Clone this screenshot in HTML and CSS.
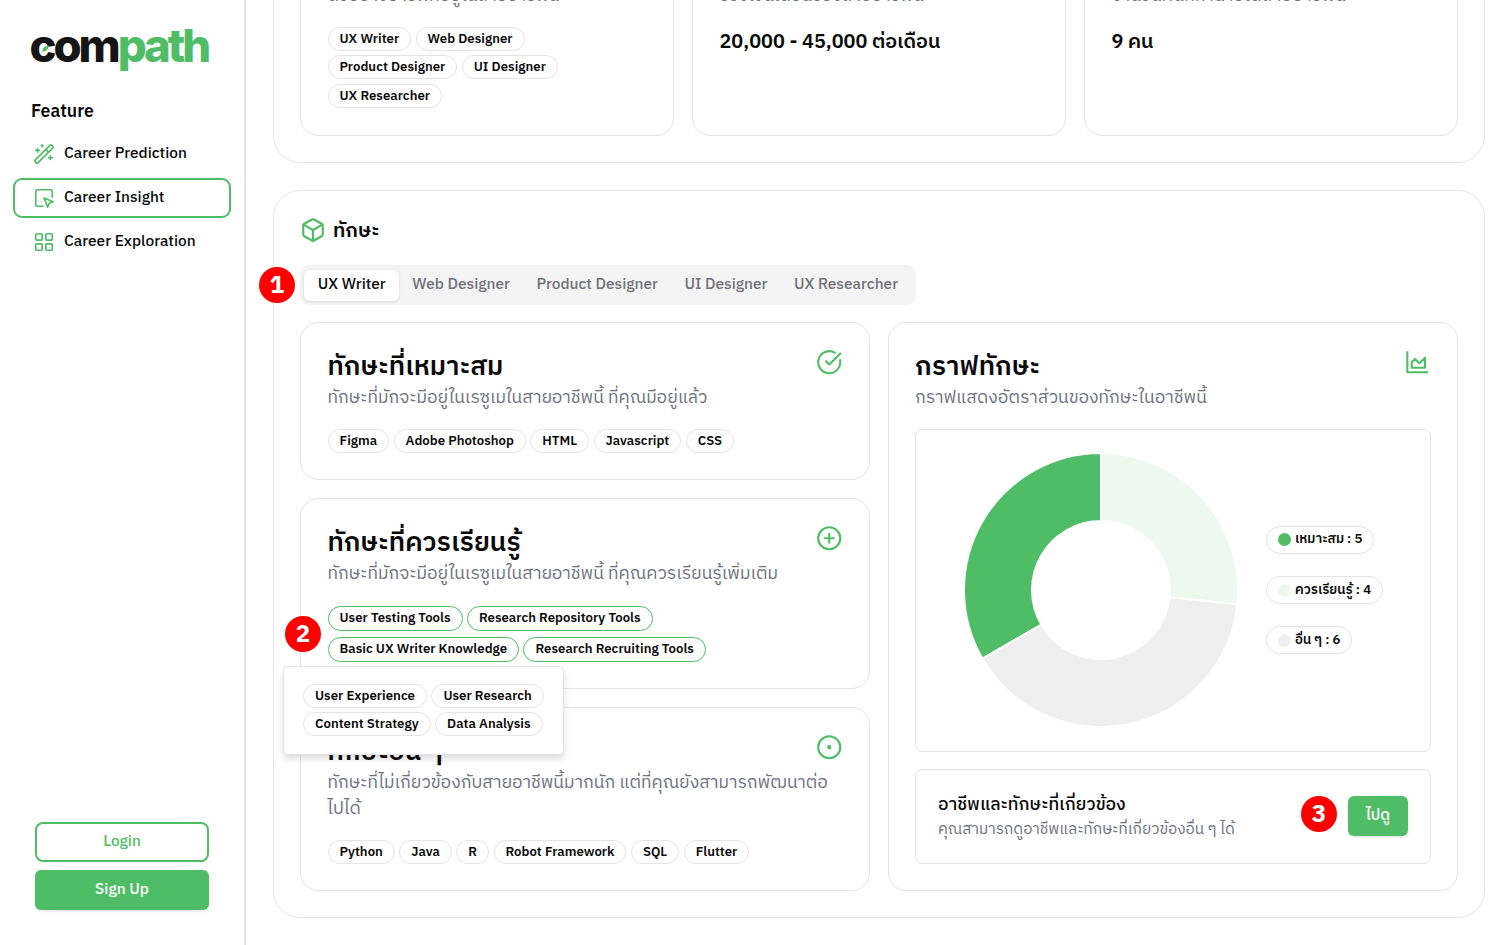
FILE: index.html
```html
<!DOCTYPE html>
<html lang="th">
<head>
<meta charset="utf-8">
<title>Compath – Career Insight</title>
<link rel="stylesheet" href="styles.css">
</head>
<body>
<div class="app">
  <aside class="sidebar">
    <div class="logo"><span class="logo-dark">com</span><span class="logo-green">path</span>
      <svg class="logo-leaf" viewBox="0 0 8 8"><path d="M0.5 7.5C0 4 3 1 7.5 0.5C7.500 4.500 5 7.500 0.500 7.500Z" fill="#4fbd65"/></svg>
    </div>
    <h2 class="nav-title">Feature</h2>
    <nav class="nav">
      <a class="nav-item"><svg class="icon nav-icon" viewBox="0 0 24 24"><path d="m21.640 3.640-1.280-1.280a1.210 1.210 0 0 0-1.720 0L2.360 18.640a1.210 1.210 0 0 0 0 1.720l1.280 1.280a1.200 1.200 0 0 0 1.720 0L21.640 5.360a1.200 1.200 0 0 0 0-1.720Z"/><path d="m14 7 3 3M5 6v4M19 14v4M10 2v2M7 8H3M21 16h-4M11 3H9"/></svg><span>Career Prediction</span></a>
      <a class="nav-item active"><svg class="icon nav-icon" viewBox="0 0 24 24"><path d="m12 12 4 10 1.700-4.300L22 16Z"/><path d="M21 11V5a2 2 0 0 0-2-2H5a2 2 0 0 0-2 2v14a2 2 0 0 0 2 2h6"/></svg><span>Career Insight</span></a>
      <a class="nav-item"><svg class="icon nav-icon" viewBox="0 0 24 24"><rect x="3" y="3" width="7" height="7" rx="1"/><rect x="14" y="3" width="7" height="7" rx="1"/><rect x="14" y="14" width="7" height="7" rx="1"/><rect x="3" y="14" width="7" height="7" rx="1"/></svg><span>Career Exploration</span></a>
    </nav>
    <div class="auth"><button class="btn outline">Login</button><button class="btn solid">Sign Up</button></div>
  </aside>
  <main class="main">
    <section class="panel summary">
      <article class="card">
        <h3 class="card-title">ตำแหน่ง</h3>
        <p class="desc">ตัวอย่างอาชีพที่อยู่ในสายอาชีพนี้</p>
        <div class="chips narrow"><span class="chip">UX Writer</span><span class="chip">Web Designer</span><span class="chip">Product Designer</span><span class="chip">UI Designer</span><span class="chip">UX Researcher</span></div>
      </article>
      <article class="card">
        <h3 class="card-title">เงินเดือน</h3>
        <p class="desc">ช่วงเงินเดือนของสายอาชีพนี้</p>
        <p class="figure">20,000 - 45,000 ต่อเดือน</p>
      </article>
      <article class="card">
        <h3 class="card-title">จำนวนคน</h3>
        <p class="desc wide">จำนวนคนที่ทำนายได้สายอาชีพนี้</p>
        <p class="figure">9 คน</p>
      </article>
    </section>

    <section class="panel skills">
      <header class="panel-head"><svg class="icon head-icon" viewBox="0 0 24 24"><path d="M21 8a2 2 0 0 0-1-1.730l-7-4a2 2 0 0 0-2 0l-7 4A2 2 0 0 0 3 8v8a2 2 0 0 0 1 1.730l7 4a2 2 0 0 0 2 0l7-4A2 2 0 0 0 21 16Z"/><path d="m3.300 7 8.700 5 8.700-5M12 22V12"/></svg><h2 class="panel-title">ทักษะ</h2></header>
      <div class="tabs-row">
        <div class="tabs"><span class="tab on">UX Writer</span><span class="tab">Web Designer</span><span class="tab">Product Designer</span><span class="tab">UI Designer</span><span class="tab">UX Researcher</span></div>
        <span class="marker m1">1</span>
      </div>
      <div class="columns">
        <div class="col">
          <article class="card">
            <svg class="icon card-icon" viewBox="0 0 24 24"><path d="M21.801 10A10 10 0 1 1 17 3.335"/><path d="m9 11 3 3L22 4"/></svg>
            <h3 class="card-title">ทักษะที่เหมาะสม</h3>
            <p class="desc">ทักษะที่มักจะมีอยู่ในเรซูเมในสายอาชีพนี้ ที่คุณมีอยู่แล้ว</p>
            <div class="chips"><span class="chip">Figma</span><span class="chip">Adobe Photoshop</span><span class="chip">HTML</span><span class="chip">Javascript</span><span class="chip">CSS</span></div>
          </article>
          <article class="card">
            <svg class="icon card-icon" viewBox="0 0 24 24"><circle cx="12" cy="12" r="10"/><path d="M8 12h8M12 8v8"/></svg>
            <h3 class="card-title">ทักษะที่ควรเรียนรู้</h3>
            <p class="desc">ทักษะที่มักจะมีอยู่ในเรซูเมในสายอาชีพนี้ ที่คุณควรเรียนรู้เพิ่มเติม</p>
            <div class="chips learn"><span class="chip">User Testing Tools</span><span class="chip">Research Repository Tools</span><span class="chip">Basic UX Writer Knowledge</span><span class="chip">Research Recruiting Tools</span></div>
            <span class="marker m2">2</span>
            <div class="popover"><div class="chips"><span class="chip">User Experience</span><span class="chip">User Research</span><span class="chip">Content Strategy</span><span class="chip">Data Analysis</span></div></div>
          </article>
          <article class="card">
            <svg class="icon card-icon" viewBox="0 0 24 24"><circle cx="12" cy="12" r="10"/><circle cx="12" cy="12" r="1"/></svg>
            <h3 class="card-title">ทักษะอื่น ๆ</h3>
            <p class="desc">ทักษะที่ไม่เกี่ยวข้องกับสายอาชีพนี้มากนัก แต่ที่คุณยังสามารถพัฒนาต่อ<br>ไปได้</p>
            <div class="chips"><span class="chip">Python</span><span class="chip">Java</span><span class="chip">R</span><span class="chip">Robot Framework</span><span class="chip">SQL</span><span class="chip">Flutter</span></div>
          </article>
        </div>
        <article class="card graph">
          <svg class="icon card-icon" viewBox="0 0 24 24"><path d="M3 3v18h18" stroke-linecap="square"/><path d="M7 12v5h12V8l-5 5-4-4Z"/></svg>
          <h3 class="card-title">กราฟทักษะ</h3>
          <p class="desc">กราฟแสดงอัตราส่วนของทักษะในอาชีพนี้</p>
          <div class="chart-box">
            <svg class="donut" viewBox="-138 -138 276 276">
              <g stroke="#fff" stroke-width="2">
                <path fill="#edf8ef" d="M0-137A137 137 0 0 1 136.250 14.320L68.620 7.210A69 69 0 0 0 0-69Z"/>
                <path fill="#efefef" d="M136.250 14.320A137 137 0 0 1-118.650 68.500L-59.760 34.500A69 69 0 0 0 68.620 7.210Z"/>
                <path fill="#4fbd65" d="M-118.650 68.500A137 137 0 0 1 0-137V-69A69 69 0 0 0-59.760 34.500Z"/>
              </g>
            </svg>
            <div class="legend">
              <span class="key"><i class="dot fit"></i><span>เหมาะสม : 5</span></span>
              <span class="key"><i class="dot learn-dot"></i><span>ควรเรียนรู้ : 4</span></span>
              <span class="key"><i class="dot other"></i><span>อื่น ๆ : 6</span></span>
            </div>
          </div>
          <div class="related">
            <div class="related-text"><strong>อาชีพและทักษะที่เกี่ยวข้อง</strong><small>คุณสามารถดูอาชีพและทักษะที่เกี่ยวข้องอื่น ๆ ได้</small></div>
            <span class="marker m3">3</span>
            <button class="btn go">ไปดู</button>
          </div>
        </article>
      </div>
    </section>
  </main>
</div>
</body>
</html>
```
FILE: styles.css
```css
* { box-sizing: border-box; }
body, h2, h3, p { margin: 0; }
body {
  font-family: "IBM Plex Sans Thai", "Noto Sans Thai", Roboto, "Noto Sans", sans-serif;
  color: #0a0a0b;
  background: #fff;
  overflow: hidden;
}
.app { display: flex; height: 945px; overflow: hidden; }
.icon { fill: none; stroke: #4fbd65; stroke-width: 2; stroke-linecap: round; stroke-linejoin: round; flex: none; }

.sidebar { width: 246px; flex: none; border-right: 2px solid #e4e4e7; padding: 18px 13px 35px; display: flex; flex-direction: column; }
.logo { position: relative; height: 56px; margin-left: 16.500px; font: 800 45.500px/56px Inter, sans-serif; letter-spacing: -3.100px; white-space: nowrap; }
.logo-dark { color: #151515; }
.logo-green { color: #4fbd65; }
.logo-leaf { position: absolute; left: 12px; top: 27px; width: 7px; height: 7px; }
.nav-title { font-size: 17.600px; font-weight: 600; line-height: 26px; margin: 25px 0 9px 18px; }
.nav { display: flex; flex-direction: column; gap: 4px; }
.nav-item { height: 40px; border: 2px solid transparent; border-radius: 9px; display: flex; align-items: center; gap: 9px; padding: 0 18px; font-size: 15.400px; font-weight: 500; line-height: 20px; }
.nav-item span { margin-top: -1px; }
.nav-item.active { border-color: #4fbd65; }
.nav-icon { width: 22px; height: 22px; stroke-width: 1.800; margin-top: -1px; }
.auth { margin: auto 22px 0; display: flex; flex-direction: column; gap: 8px; }
.btn { height: 40px; border-radius: 6px; border: 0; font-family: inherit; font-size: 15.400px; line-height: 20px; font-weight: 500; padding: 0; }
.outline { border: 2px solid #4fbd65; background: #fff; color: #4fbd65; border-radius: 8px; }
.solid, .go { background: #4fbd65; color: #fff; box-shadow: 0 1px 3px #0002; }

.main { flex: 1; padding: 0 27px; min-width: 0; }
.panel { width: 1212px; border: 1px solid #e6e6e8; border-radius: 27px; padding: 26px; }
.summary { margin-top: -107px; height: 270px; display: grid; grid-template-columns: repeat(3, 374px); gap: 18px; }
.card { position: relative; border: 1px solid #e4e4e7; border-radius: 18px; padding: 26px 26.500px; }
.card-title { font-size: 26.400px; line-height: 37px; height: 36px; font-weight: 600; white-space: nowrap; }
.desc { font-size: 17.600px; line-height: 26px; color: #6b7280; white-space: nowrap; margin-bottom: 18px; }
.wide { letter-spacing: 0.300px; }
.figure { font-size: 19.800px; line-height: 31px; font-weight: 600; }
.chips { display: flex; flex-wrap: wrap; gap: 4.400px; }
.narrow { width: 250px; }
.chip { height: 24px; border: 1px solid #e4e4e7; border-radius: 12px; padding: 0 11px; font-size: 13.200px; font-weight: 600; line-height: 22px; white-space: nowrap; letter-spacing: 0.020px; }
.narrow .chip { line-height: 23px; }

.skills { margin-top: 27px; height: 728px; }
.panel-head { display: flex; align-items: center; gap: 7px; height: 26px; }
.head-icon { width: 26px; height: 26px; }
.panel-title { font-size: 20px; line-height: 26px; font-weight: 600; padding-top: 3px; }
.tabs-row { position: relative; margin: 22px 0 17px; height: 40px; display: flex; }
.tabs { display: flex; align-items: center; background: #f4f4f5; border-radius: 9px; padding: 0 4.400px; }
.tab { height: 31px; border-radius: 6px; padding: 0 13.250px; font-size: 15.400px; line-height: 30px; font-weight: 500; color: #71717a; white-space: nowrap; }
.tab.on { background: #fff; color: #0a0a0b; box-shadow: 0 1px 3px #0002; }
.marker { width: 36px; height: 36px; border-radius: 50%; background: #f00; color: #fff; font-size: 24px; font-weight: 700; line-height: 38px; text-align: center; flex: none; }
.m1 { position: absolute; left: -41px; top: 2px; }
.m2 { position: absolute; left: -16px; top: 117px; }
.m3 { margin-top: -5px; }

.columns { display: grid; grid-template-columns: 570px 570px; gap: 18px; height: 569px; }
.col { display: grid; grid-template-rows: 158px 191px 184px; gap: 18px; }
.card-icon { position: absolute; right: 26.500px; top: 26px; width: 26.500px; height: 26.500px; stroke-width: 1.900; }
.learn { gap: 6px 4.400px; padding-top: 1px; width: 400px; }
.learn .chip { border-color: #4fbd65; height: 25px; border-radius: 13px; line-height: 23px; }
.popover { position: absolute; z-index: 3; left: -18px; top: 167px; width: 281px; height: 89px; background: #fff; border: 1px solid #e4e4e7; border-radius: 5px; box-shadow: 0 4px 7px #0002; padding: 17px 15px 17px 19px; }

.graph { height: 569px; padding: 26px; }
.chart-box { height: 323px; width: 516px; border: 1px solid #e4e4e7; border-radius: 7px; display: flex; align-items: center; padding: 0 0 1px 47px; }
.donut { width: 276px; height: 276px; flex: none; }
.legend { margin-left: 27px; display: flex; flex-direction: column; align-items: flex-start; gap: 22.300px; }
.key { height: 28px; border: 1px solid #e4e4e7; border-radius: 14px; padding: 0 11px 0 10.500px; display: flex; align-items: center; gap: 4.500px; font-size: 13.200px; font-weight: 600; white-space: nowrap; }
.key span { margin-top: -1px; }
.dot { width: 13px; height: 13px; border-radius: 50%; }
.fit { background: #4fbd65; }
.learn-dot { background: #edf8ef; }
.other { background: #efefef; }
.related { margin-top: 17px; width: 516px; height: 95px; border: 1px solid #e4e4e7; border-radius: 7px; display: flex; align-items: center; padding: 0 22px; }
.related-text { flex: 1; display: flex; flex-direction: column; white-space: nowrap; }
.related-text strong { font-size: 17.600px; line-height: 26px; font-weight: 500; }
.related-text small { font-size: 15.400px; line-height: 24px; color: #6b7280; }
.go { width: 60px; margin: -1px 0 0 11px; }
```
